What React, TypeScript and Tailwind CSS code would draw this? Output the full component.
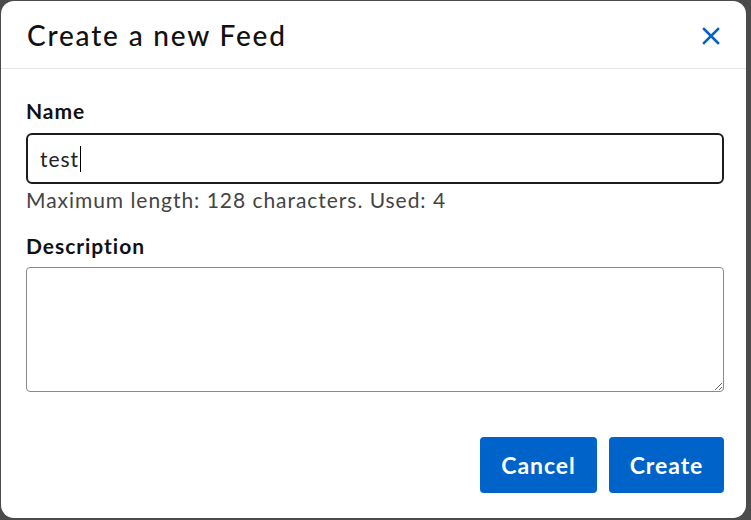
import React from "react";

export default function App() {
  return (
    <div className="w-[751px] h-[520px] bg-[#4b4b4b] pt-[1px] pl-[1px] pr-[5px] pb-[2px]" style={{ fontFamily: "Lato, 'Open Sans', sans-serif" }}>
      <div className="w-full h-full bg-white rounded-[13px] flex flex-col">
        <div className="h-[68px] flex items-center justify-between pl-[26px] pr-[26px] border-b border-[#e5e5e5]">
          <h1 className="text-[28px] font-medium text-[#111] tracking-[0.065em]">Create a new Feed</h1>
          <svg width="18" height="18" viewBox="0 0 18 18" className="mt-[2px]">
            <path d="M2 2 L16 16 M16 2 L2 16" stroke="#0563c1" strokeWidth="2.6" strokeLinecap="square" />
          </svg>
        </div>
        <div className="pl-[25px] pr-[22px] pt-[29px] flex flex-col flex-1 tracking-[0.06em]">
          <label className="text-[21px] font-bold text-[#111] leading-[26px]">Name</label>
          <div className="mt-[9px] h-[51px] border-2 border-[#1c1c1c] rounded-[6px] flex items-center px-[12px]">
            <span className="text-[21px] text-[#222]">test</span>
            <span className="w-[1px] h-[26px] bg-black ml-[1px]"></span>
          </div>
          <div className="mt-[3px] text-[21px] text-[#444] leading-[26px]">Maximum length: 128 characters. Used: 4</div>
          <label className="mt-[20px] text-[21px] font-bold text-[#111] leading-[26px]">Description</label>
          <textarea className="mt-[8px] h-[125px] border border-[#8a8a8a] rounded-[4px] resize-y outline-none"></textarea>
          <div className="mt-[45px] flex justify-end gap-[12px]">
            <button className="w-[117px] h-[56px] bg-[#0063c9] text-white text-[23px] font-bold rounded-[4px] tracking-[0.04em]">Cancel</button>
            <button className="w-[115px] h-[56px] bg-[#0063c9] text-white text-[23px] font-bold rounded-[4px] tracking-[0.04em]">Create</button>
          </div>
        </div>
      </div>
    </div>
  );
}
